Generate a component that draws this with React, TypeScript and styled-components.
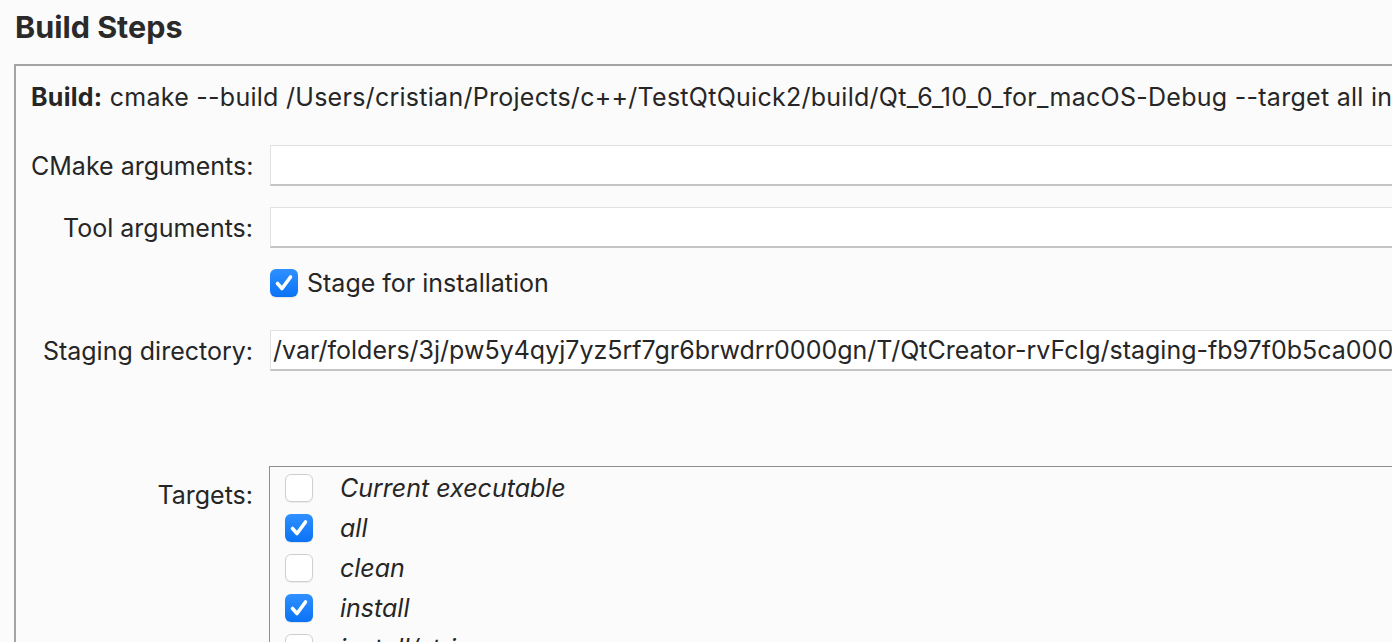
import React from "react";
import styled, {createGlobalStyle} from "styled-components";

const GlobalStyle = createGlobalStyle`
  html, body {
    margin: 0;
    padding: 0;
    background: #fbfbfb;
    overflow: hidden;
  }
  body {
    font-family: Inter, "Noto Sans", "Liberation Sans", sans-serif;
    color: #262626;
  }
`;

interface Target {
    name: string;
    checked: boolean;
}

const targets: Target[] = [
    {name: "Current executable", checked: false},
    {name: "all", checked: true},
    {name: "clean", checked: false},
    {name: "install", checked: true},
    {name: "install/strip", checked: false},
];

const CheckBox: React.FC<{ checked: boolean }> = ({checked}) => (
    <Box $checked={checked}>
        {checked && (
            <svg width="100%" height="100%" viewBox="0 0 28 28">
                <path d="M7.5 14.5 L12 19.5 L20.5 8" fill="none" stroke="#fff" strokeWidth="3.6"
                      strokeLinecap="round" strokeLinejoin="round"/>
            </svg>
        )}
    </Box>
);

const App: React.FC = () => {
    return (
        <Page>
            <GlobalStyle/>
            <Title>Build Steps</Title>
            <Panel>
                <BuildLine>
                    <b>Build:</b> cmake --build /Users/cristian/Projects/c++/TestQtQuick2/build/Qt_6_10_0_for_macOS-Debug --target all install
                </BuildLine>
                <FormRow $top={33}>
                    <Label>CMake arguments:</Label>
                    <Input/>
                </FormRow>
                <FormRow $top={21}>
                    <Label>Tool arguments:</Label>
                    <Input/>
                </FormRow>
                <FormRow $top={20}>
                    <span/>
                    <CheckRow>
                        <CheckBox checked={true}/>
                        <span>Stage for installation</span>
                    </CheckRow>
                </FormRow>
                <FormRow $top={32}>
                    <Label>Staging directory:</Label>
                    <Input>/var/folders/3j/pw5y4qyj7yz5rf7gr6brwdrr0000gn/T/QtCreator-rvFcIg/staging-fb97f0b5ca000c3a</Input>
                </FormRow>
                <FormRow $top={95} $alignTop>
                    <Label $pad={14}>Targets:</Label>
                    <TargetList>
                        {targets.map(t => (
                            <TargetRow key={t.name}>
                                <CheckBox checked={t.checked}/>
                                <TargetName>{t.name}</TargetName>
                            </TargetRow>
                        ))}
                    </TargetList>
                </FormRow>
            </Panel>
        </Page>
    );
};

export default App;

const Page = styled.div`
  width: 1392px;
  height: 642px;
  overflow: hidden;
  padding: 0 0 0 14px;
  box-sizing: border-box;
`;

const Title = styled.h1`
  margin: 0;
  padding-top: 8px;
  height: 64px;
  box-sizing: border-box;
  font-size: 30.5px;
  font-weight: 700;
  line-height: 38px;
  color: #2a2a2a;
  padding-left: 1px;
`;

const Panel = styled.div`
  width: 1700px;
  border: 2px solid #a4a4a4;
  border-right: none;
  padding: 16px 0 0 15px;
  height: 700px;
  box-sizing: border-box;
`;

const BuildLine = styled.div`
  font-size: 25px;
  line-height: 30px;
  letter-spacing: 0.27px;
  white-space: nowrap;

  b {
    font-weight: 700;
  }
`;

const FormRow = styled.div<{ $top: number; $alignTop?: boolean }>`
  display: grid;
  grid-template-columns: 222px 1fr;
  column-gap: 17px;
  align-items: ${({$alignTop}) => $alignTop ? "start" : "center"};
  margin-top: ${({$top}) => $top}px;
`;

const Label = styled.div<{ $pad?: number }>`
  text-align: right;
  font-size: 25px;
  line-height: 30px;
  white-space: nowrap;
  padding-top: ${({$pad}) => $pad || 0}px;
`;

const Input = styled.div`
  height: 41px;
  box-sizing: border-box;
  background: #ffffff;
  border: 1px solid #e1e1e1;
  border-bottom: 2px solid #c4c4c4;
  padding: 0 0 0 2px;
  font-size: 25px;
  line-height: 38px;
  white-space: nowrap;
  overflow: hidden;
`;

const CheckRow = styled.label`
  display: flex;
  align-items: center;
  gap: 9px;
  font-size: 25px;
  line-height: 30px;
  white-space: nowrap;
`;

const Box = styled.span<{ $checked: boolean }>`
  display: inline-block;
  flex: none;
  width: 28px;
  height: 28px;
  box-sizing: border-box;
  border-radius: 6px;
  background: ${({$checked}) => $checked ? "linear-gradient(#2f90ff, #0a72f6)" : "#ffffff"};
  border: ${({$checked}) => $checked ? "none" : "1px solid #cfcfcf"};
  box-shadow: ${({$checked}) => $checked ? "0 1px 1px rgba(0,0,0,0.1)" : "0 1px 1px rgba(0,0,0,0.06)"};
`;

const TargetList = styled.div`
  border: 1px solid #8f8f8f;
  border-right: none;
  border-bottom: none;
  margin-left: -1px;
  padding: 1px 0 0 15px;
  height: 300px;
  box-sizing: border-box;
`;

const TargetRow = styled.div`
  display: flex;
  align-items: center;
  gap: 27px;
  height: 40px;
`;

const TargetName = styled.span`
  font-size: 25px;
  font-style: italic;
  line-height: 30px;
  white-space: nowrap;
`;
